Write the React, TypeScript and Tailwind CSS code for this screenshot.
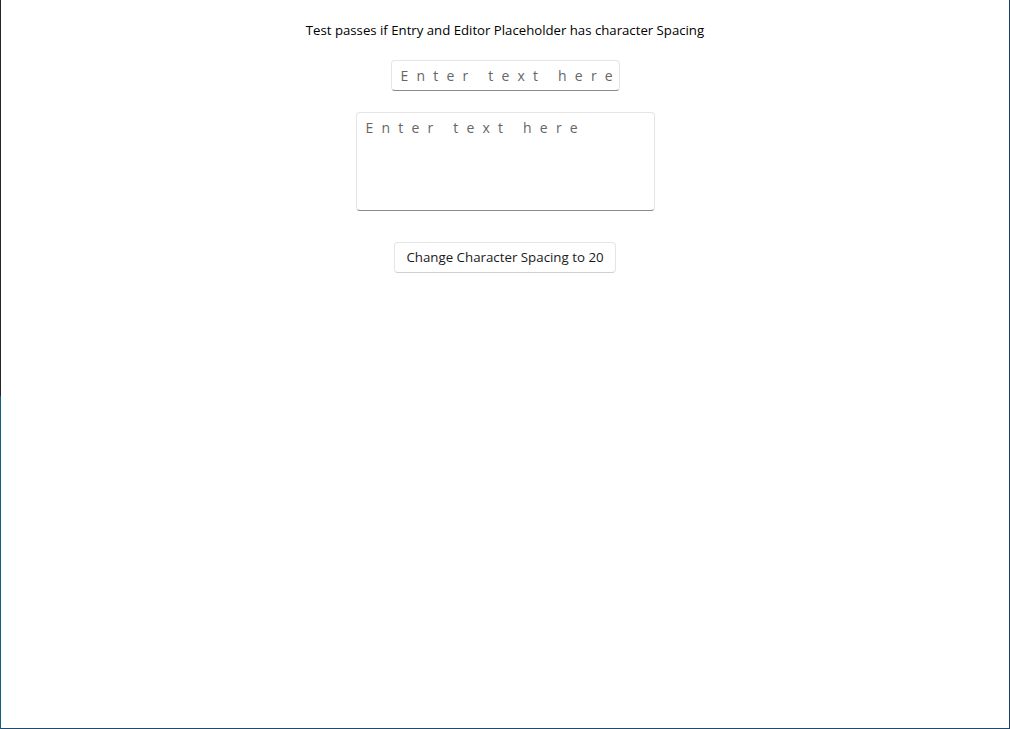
import React from 'react';

const font = { fontFamily: '"Segoe UI", "Open Sans", sans-serif' };

export default function App() {
  return (
    <div className="flex h-[729px] w-[1010px] bg-white" style={font}>
      <div className="flex w-px flex-col">
        <div className="h-[396px] bg-[#262626]"></div>
        <div className="flex-1 bg-[#13607e]"></div>
      </div>
      <div className="flex flex-1 flex-col items-center border-b border-[#1d4a6e] pt-[20px]">
        <p className="text-[13.2px] leading-[20px] text-black">
          Test passes if Entry and Editor Placeholder has character Spacing
        </p>
        <input
          type="text"
          placeholder="Enter text here"
          className="mt-[20px] h-[31px] w-[229px] rounded-[4px] border border-[#e5e5e5] border-b-[#8a8a8a] bg-white pl-[9px] pr-0 text-[14px] tracking-[8.2px] text-black placeholder:text-[#666666] focus:outline-none"
        />
        <textarea
          placeholder="Enter text here"
          className="mt-[21px] h-[99px] w-[299px] resize-none rounded-[4px] border border-[#e5e5e5] border-b-[#8a8a8a] bg-white px-[9px] py-[5px] text-[14px] leading-[20px] tracking-[8.2px] text-black placeholder:text-[#666666] focus:outline-none"
        ></textarea>
        <button className="mt-[31px] h-[31px] w-[222px] rounded-[4px] border border-[#e5e5e5] border-b-[#d0d0d0] bg-white text-[13.3px] text-[#1a1a1a]">
          Change Character Spacing to 20
        </button>
      </div>
      <div className="w-px bg-[#1d3d63]"></div>
    </div>
  );
}
